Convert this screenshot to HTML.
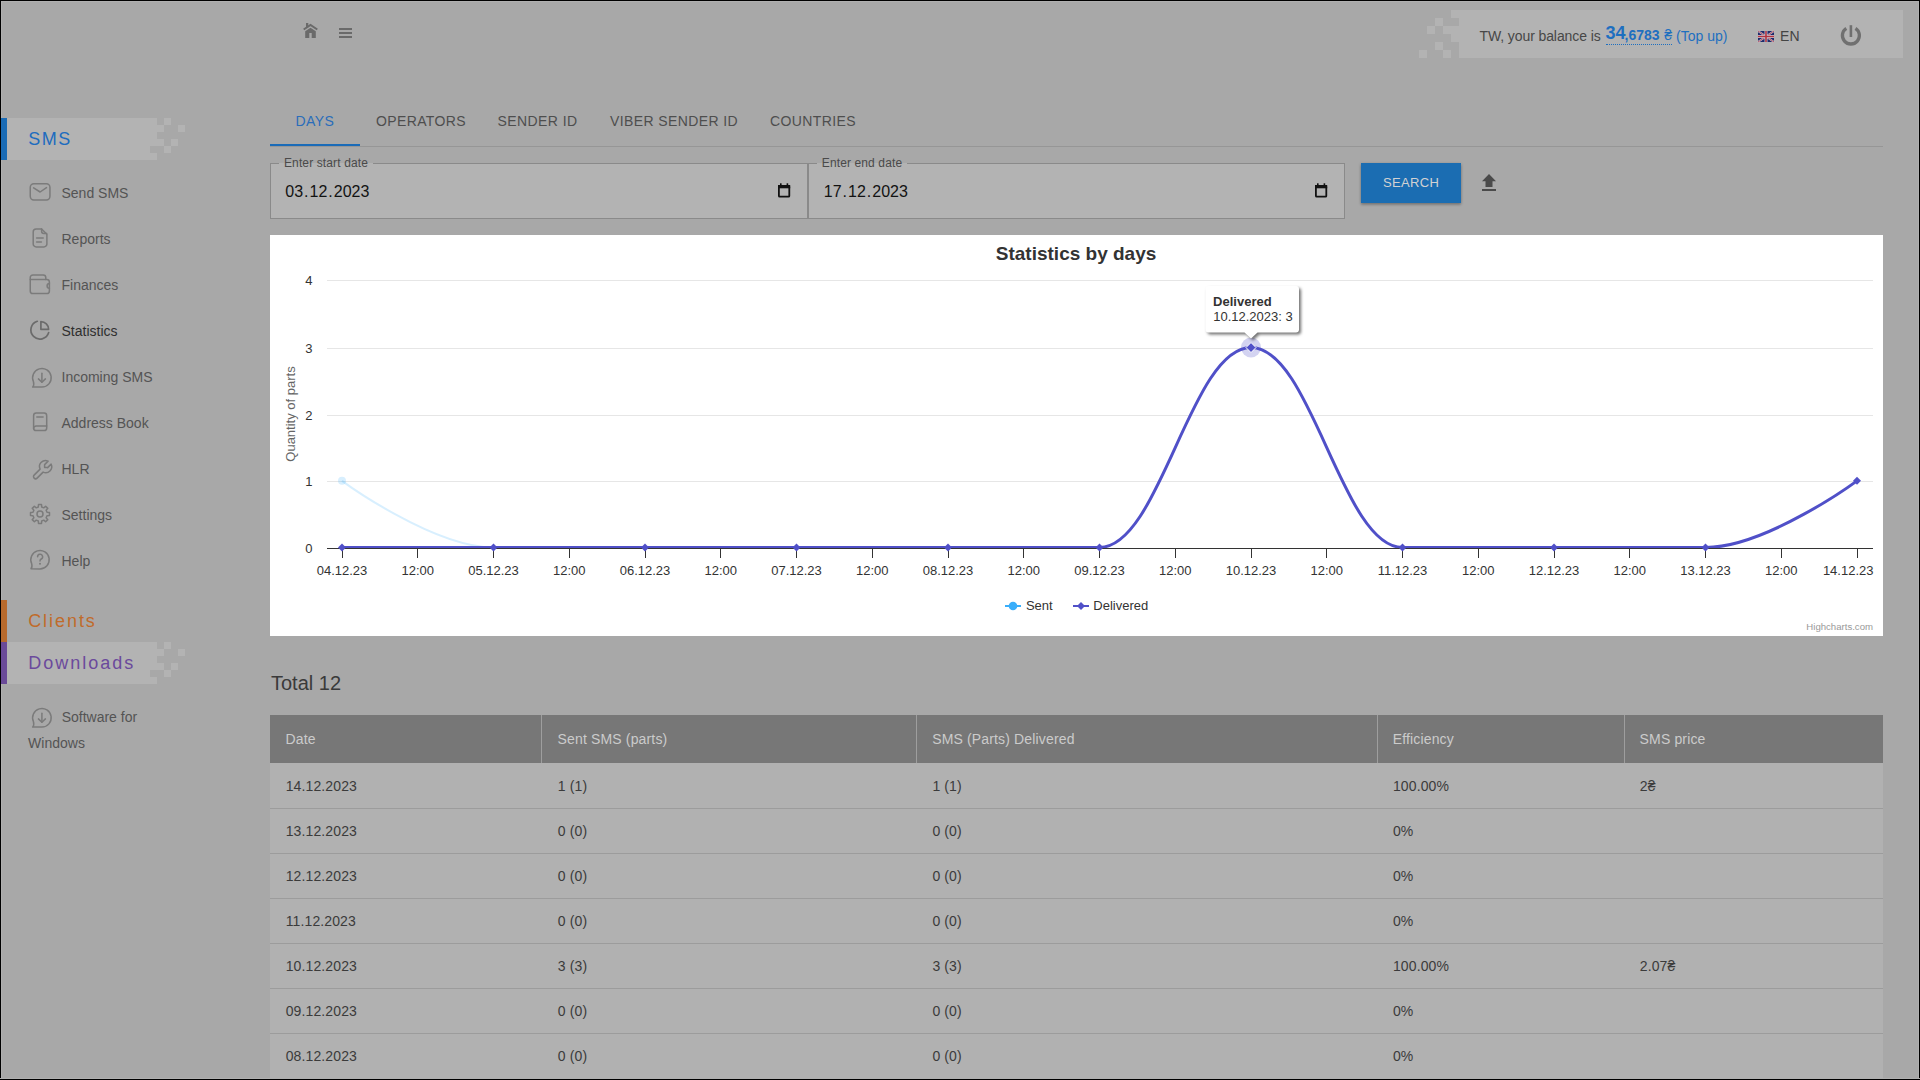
<!DOCTYPE html><html><head><meta charset="utf-8"><style>
html,body{margin:0;padding:0;}
body{width:1920px;height:1080px;overflow:hidden;position:relative;background:#a8a8a8;font-family:"Liberation Sans", sans-serif;}
.t{position:absolute;white-space:nowrap;}
.r{position:absolute;}
svg{position:absolute;overflow:visible;}
</style></head><body>
<div class="r" style="left:0px;top:0px;width:1920px;height:1px;background:#000;"></div>
<div class="r" style="left:0px;top:1079px;width:1920px;height:1px;background:#000;"></div>
<div class="r" style="left:0px;top:0px;width:1px;height:1080px;background:#000;"></div>
<div class="r" style="left:1919px;top:0px;width:1px;height:1080px;background:#000;"></div>
<div class="r" style="left:1px;top:1px;width:1918px;height:1px;background:#b0b0b0;"></div>
<div class="r" style="left:1px;top:1078px;width:1918px;height:1px;background:#b0b0b0;"></div>
<div class="r" style="left:1px;top:1px;width:1px;height:1078px;background:#b0b0b0;"></div>
<div class="r" style="left:1918px;top:1px;width:1px;height:1078px;background:#b0b0b0;"></div>
<div class="r" style="left:7px;top:118px;width:150px;height:42px;background:#b3b3b3;"></div>
<div class="r" style="left:164px;top:118px;width:7px;height:7px;background:#b3b3b3;"></div>
<div class="r" style="left:157px;top:125px;width:7px;height:7px;background:#b3b3b3;"></div>
<div class="r" style="left:178px;top:125px;width:7px;height:7px;background:#b3b3b3;"></div>
<div class="r" style="left:157px;top:139px;width:7px;height:7px;background:#b3b3b3;"></div>
<div class="r" style="left:171px;top:139px;width:7px;height:7px;background:#b3b3b3;"></div>
<div class="r" style="left:164px;top:146px;width:7px;height:7px;background:#b3b3b3;"></div>
<div class="r" style="left:150px;top:146px;width:7px;height:7px;background:#a8a8a8;"></div>
<div class="r" style="left:7px;top:642px;width:150px;height:42px;background:#b3b3b3;"></div>
<div class="r" style="left:164px;top:642px;width:7px;height:7px;background:#b3b3b3;"></div>
<div class="r" style="left:157px;top:649px;width:7px;height:7px;background:#b3b3b3;"></div>
<div class="r" style="left:178px;top:649px;width:7px;height:7px;background:#b3b3b3;"></div>
<div class="r" style="left:157px;top:663px;width:7px;height:7px;background:#b3b3b3;"></div>
<div class="r" style="left:171px;top:663px;width:7px;height:7px;background:#b3b3b3;"></div>
<div class="r" style="left:164px;top:670px;width:7px;height:7px;background:#b3b3b3;"></div>
<div class="r" style="left:150px;top:670px;width:7px;height:7px;background:#a8a8a8;"></div>
<div class="r" style="left:1px;top:118px;width:6px;height:42px;background:#1a6bb5;"></div>
<div class="r" style="left:1px;top:600px;width:6px;height:42px;background:#b86a2c;"></div>
<div class="r" style="left:1px;top:642px;width:6px;height:42px;background:#6a4a98;"></div>
<div class="r" style="left:1459px;top:10px;width:444px;height:48px;background:#b3b3b3;"></div>
<div class="r" style="left:1451px;top:10px;width:8px;height:8px;background:#b3b3b3;"></div>
<div class="r" style="left:1435px;top:18px;width:8px;height:8px;background:#b3b3b3;"></div>
<div class="r" style="left:1443px;top:26px;width:16px;height:8px;background:#b3b3b3;"></div>
<div class="r" style="left:1427px;top:26px;width:8px;height:8px;background:#b3b3b3;"></div>
<div class="r" style="left:1451px;top:34px;width:8px;height:8px;background:#b3b3b3;"></div>
<div class="r" style="left:1435px;top:42px;width:8px;height:8px;background:#b3b3b3;"></div>
<div class="r" style="left:1419px;top:50px;width:8px;height:8px;background:#b3b3b3;"></div>
<div class="r" style="left:1443px;top:50px;width:8px;height:8px;background:#b3b3b3;"></div>
<div class="t" style="left:28.15px;top:129.56px;font-size:18px;line-height:18px;color:#1d6cbf;letter-spacing:1.6px;">SMS</div>
<div class="t" style="left:28.15px;top:611.56px;font-size:18px;line-height:18px;color:#c06b2b;letter-spacing:1.95px;">Clients</div>
<div class="t" style="left:28.15px;top:653.51px;font-size:18px;line-height:18px;color:#6b4a9c;letter-spacing:2.0px;">Downloads</div>
<div class="t" style="left:61.5px;top:186.15px;font-size:14px;line-height:14px;color:#545454;">Send SMS</div>
<div class="t" style="left:61.5px;top:232.15px;font-size:14px;line-height:14px;color:#545454;">Reports</div>
<div class="t" style="left:61.5px;top:278.15px;font-size:14px;line-height:14px;color:#545454;">Finances</div>
<div class="t" style="left:61.5px;top:324.15px;font-size:14px;line-height:14px;color:#2f2f2f;">Statistics</div>
<div class="t" style="left:61.5px;top:370.15px;font-size:14px;line-height:14px;color:#545454;">Incoming SMS</div>
<div class="t" style="left:61.5px;top:416.15px;font-size:14px;line-height:14px;color:#545454;">Address Book</div>
<div class="t" style="left:61.5px;top:462.15px;font-size:14px;line-height:14px;color:#545454;">HLR</div>
<div class="t" style="left:61.5px;top:508.15px;font-size:14px;line-height:14px;color:#545454;">Settings</div>
<div class="t" style="left:61.5px;top:554.15px;font-size:14px;line-height:14px;color:#545454;">Help</div>
<div class="t" style="left:61.65px;top:709.95px;font-size:14px;line-height:14px;color:#545454;">Software for</div>
<div class="t" style="left:28.1px;top:735.85px;font-size:14px;line-height:14px;color:#545454;">Windows</div>
<svg width="1920" height="1080" style="left:0;top:0" viewBox="0 0 1920 1080">
<g fill="none" stroke="#7b7b7b" stroke-width="1.5" stroke-linecap="round" stroke-linejoin="round">
<rect x="30.25" y="183.85" width="19.7" height="16.1" rx="3.6"/>
<polyline points="33.6,187.8 40.1,192 46.5,187.6"/>
<path d="M 41.6 228.95 H 36.2 A 3 3 0 0 0 33.2 231.95 V 243.9 A 3 3 0 0 0 36.2 246.9 H 43.9 A 3 3 0 0 0 46.9 243.9 V 234.2 Z"/>
<path d="M 41.6 228.95 V 231.2 A 2.2 2.2 0 0 0 43.8 233.4 H 46.6"/>
<line x1="36.6" y1="238" x2="43.2" y2="238"/>
<line x1="36.6" y1="241.9" x2="41.4" y2="241.9"/>
<path d="M 30.25 279.4 V 290.9 A 2.6 2.6 0 0 0 32.85 293.5 H 46.8 A 2.6 2.6 0 0 0 49.4 290.9 V 282 A 2.6 2.6 0 0 0 46.8 279.4 Z"/>
<path d="M 30.25 279.4 V 277.6 A 2.6 2.6 0 0 1 32.85 275 H 43.2 A 2.6 2.6 0 0 1 45.8 277.6 V 279.4"/>
<path d="M 49.4 283.6 A 2.3 2.3 0 0 0 49.4 288.2"/>
<path d="M 32.70 387.10 L 41.90 387.10 A 9.3 9.3 0 1 0 33.47 381.73 Q 34.37 385.42 32.70 387.10 Z"/>
<line x1="41.9" y1="373.2" x2="41.9" y2="382.2"/>
<polyline points="38.4,378.9 41.9,382.3 45.4,378.9"/>
<rect x="33.6" y="413.1" width="13.1" height="17.5" rx="2.6"/>
<path d="M 33.6 428.6 A 2.6 2.6 0 0 1 36.2 426 H 46.7"/>
<line x1="36.8" y1="417" x2="43.1" y2="417"/>
<g transform="translate(30.6 457.6)"><path d="M17 10h-3v-3l3.5 -3.5a6 6 0 0 0 -8 8l-6 6a2 2 0 0 0 3 3l6 -6a6 6 0 0 0 8 -8l-3.5 3.5"/></g>
<path d="M 38.50 504.52 L 41.50 504.52 L 41.68 507.00 L 43.76 507.86 L 45.64 506.23 L 47.77 508.36 L 46.14 510.24 L 47.00 512.32 L 49.48 512.50 L 49.48 515.50 L 47.00 515.68 L 46.14 517.76 L 47.77 519.64 L 45.64 521.77 L 43.76 520.14 L 41.68 521.00 L 41.50 523.48 L 38.50 523.48 L 38.32 521.00 L 36.24 520.14 L 34.36 521.77 L 32.23 519.64 L 33.86 517.76 L 33.00 515.68 L 30.52 515.50 L 30.52 512.50 L 33.00 512.32 L 33.86 510.24 L 32.23 508.36 L 34.36 506.23 L 36.24 507.86 L 38.32 507.00 Z"/>
<circle cx="40" cy="514" r="3"/>
<path d="M 31.00 568.80 L 40.00 568.90 A 9.2 9.2 0 1 0 31.66 563.59 Q 32.56 567.19 31.00 568.80 Z"/>
<path d="M 37.6 556.8 A 2.5 2.5 0 1 1 41.3 559 C 40.4 559.5 40 560.1 40 560.9"/>
<path d="M 32.70 727.10 L 41.90 727.10 A 9.3 9.3 0 1 0 33.47 721.73 Q 34.37 725.42 32.70 727.10 Z"/>
<line x1="41.9" y1="713.2" x2="41.9" y2="722.2"/>
<polyline points="38.4,718.9 41.9,722.3 45.4,718.9"/>
</g>
<circle cx="40" cy="563.7" r="1" fill="#7b7b7b"/>
<g fill="none" stroke="#6b6b6b" stroke-width="1.7" stroke-linecap="round" stroke-linejoin="round">
<path d="M 37.3 321.3 A 9.1 9.1 0 1 0 48.7 332.6"/>
<path d="M 40.9 321.6 V 329.3 H 48.6 A 7.7 7.7 0 0 0 40.9 321.6 Z"/>
</g>
<g fill="#6a6a6a">
<polyline points="303.7,29.5 310.5,24.9 317.3,29.5" fill="none" stroke="#6a6a6a" stroke-width="2"/>
<rect x="306" y="23" width="2.3" height="4.2"/>
<path d="M 305.2 31.3 L 310.5 27.7 L 315.8 31.3 V 38 H 311.7 V 33 H 309.3 V 38 H 305.2 Z"/>
<rect x="339" y="28" width="13" height="2"/>
<rect x="339" y="32" width="13" height="2"/>
<rect x="339" y="36" width="13" height="2"/>
</g>
</svg>
<div class="t" style="left:1479.5px;top:28.85px;font-size:14px;line-height:14px;color:#474747;letter-spacing:-0.1px;">TW, your balance is</div>
<div class="t" style="left:1605.6000000000001px;top:24.46px;font-size:18px;line-height:18px;color:#1e6fc0;font-weight:700;">34</div>
<div class="t" style="left:1624.6px;top:27.95px;font-size:14px;line-height:14px;color:#1e6fc0;font-weight:700;">,6783</div>
<div class="t" style="left:1664.2px;top:27.95px;font-size:14px;line-height:14px;color:#1e6fc0;">&#8372;</div>
<div class="r" style="left:1606px;top:44px;width:66px;height:1px;background:transparent;border-top:1px dotted #1e6fc0;"></div>
<div class="t" style="left:1676.1000000000001px;top:28.85px;font-size:14px;line-height:14px;color:#1e6fc0;">(Top up)</div>
<svg width="16" height="11" style="left:1758px;top:31px" viewBox="0 0 60 40" preserveAspectRatio="none">
<rect width="60" height="40" fill="#1f2a6b"/>
<path d="M0,0 L60,40 M60,0 L0,40" stroke="#c9c9d6" stroke-width="7"/>
<path d="M0,0 L60,40 M60,0 L0,40" stroke="#b23a48" stroke-width="3"/>
<path d="M30,0 V40 M0,20 H60" stroke="#c9c9d6" stroke-width="11"/>
<path d="M30,0 V40 M0,20 H60" stroke="#b2333f" stroke-width="6"/>
</svg>
<div class="t" style="left:1780.1px;top:29.15px;font-size:14px;line-height:14px;color:#444444;">EN</div>
<svg width="30" height="30" style="left:1836px;top:20px" viewBox="1836 20 30 30">
<path d="M 1846.3 28.35 A 8.5 8.5 0 1 0 1855.5 28.35" fill="none" stroke="#707070" stroke-width="3.3" stroke-linecap="butt"/>
<rect x="1849.6" y="25.2" width="2.6" height="11.8" fill="#707070"/>
</svg>
<div class="t" style="left:295.45px;top:113.95px;font-size:14px;line-height:14px;color:#2a6dba;letter-spacing:0.4px;">DAYS</div>
<div class="t" style="left:375.9px;top:113.95px;font-size:14px;line-height:14px;color:#4e4e4e;letter-spacing:0.4px;">OPERATORS</div>
<div class="t" style="left:497.6px;top:113.95px;font-size:14px;line-height:14px;color:#4e4e4e;letter-spacing:0.4px;">SENDER ID</div>
<div class="t" style="left:609.9px;top:113.95px;font-size:14px;line-height:14px;color:#4e4e4e;letter-spacing:0.4px;">VIBER SENDER ID</div>
<div class="t" style="left:770.0px;top:113.95px;font-size:14px;line-height:14px;color:#4e4e4e;letter-spacing:0.4px;">COUNTRIES</div>
<div class="r" style="left:270px;top:146px;width:1613px;height:1px;background:#969696;"></div>
<div class="r" style="left:270px;top:144px;width:90px;height:2px;background:#1a6bb8;"></div>
<div class="r" style="left:270px;top:163px;width:538px;height:56px;background:#b3b3b3;box-sizing:border-box;border:1px solid #8a8a8a;"></div>
<div class="r" style="left:279px;top:162px;width:94px;height:2px;background:#b0b0b0;background:linear-gradient(#a8a8a8 0 1px,#b3b3b3 1px);"></div>
<div class="t" style="left:284.0px;top:156.74px;font-size:12px;line-height:12px;color:#4a4a4a;letter-spacing:0.12px;">Enter start date</div>
<div class="t" style="left:284.3px;top:183.56px;font-size:16px;line-height:16px;color:#121212;"><span style="padding:0 1px">03</span>.<span style="padding:0 1px">12</span>.<span style="padding:0 1px">2023</span></div>
<svg width="14" height="16" style="left:778px;top:182px" viewBox="0 0 14 16">
<rect x="0.9" y="3.9" width="10.4" height="10.8" fill="none" stroke="#111" stroke-width="1.8" rx="0.8"/>
<rect x="0" y="3" width="12.2" height="3.3" fill="#111"/>
<rect x="2" y="1.3" width="1.6" height="2.2" fill="#111"/>
<rect x="8.6" y="1.3" width="1.6" height="2.2" fill="#111"/>
</svg>
<div class="r" style="left:808px;top:163px;width:537px;height:56px;background:#b3b3b3;box-sizing:border-box;border:1px solid #8a8a8a;"></div>
<div class="r" style="left:817px;top:162px;width:90px;height:2px;background:#b0b0b0;background:linear-gradient(#a8a8a8 0 1px,#b3b3b3 1px);"></div>
<div class="t" style="left:821.8000000000001px;top:156.74px;font-size:12px;line-height:12px;color:#4a4a4a;letter-spacing:0.12px;">Enter end date</div>
<div class="t" style="left:822.8px;top:183.56px;font-size:16px;line-height:16px;color:#121212;"><span style="padding:0 1px">17</span>.<span style="padding:0 1px">12</span>.<span style="padding:0 1px">2023</span></div>
<svg width="14" height="16" style="left:1315px;top:182px" viewBox="0 0 14 16">
<rect x="0.9" y="3.9" width="10.4" height="10.8" fill="none" stroke="#111" stroke-width="1.8" rx="0.8"/>
<rect x="0" y="3" width="12.2" height="3.3" fill="#111"/>
<rect x="2" y="1.3" width="1.6" height="2.2" fill="#111"/>
<rect x="8.6" y="1.3" width="1.6" height="2.2" fill="#111"/>
</svg>
<div class="r" style="left:1361px;top:163px;width:100px;height:40px;background:#1b6db2;box-shadow:0 1px 3px rgba(0,0,0,0.25),0 2px 2px rgba(0,0,0,0.12);"></div>
<div class="t" style="left:1382.95px;top:175.90px;font-size:13px;line-height:13px;color:#d2d2d2;letter-spacing:0.37px;">SEARCH</div>
<svg width="16" height="20" style="left:1481px;top:172px" viewBox="1481 172 16 20">
<path d="M 1482 181.2 L 1489 174 L 1496 181.2 H 1492.5 V 187 H 1485.5 V 181.2 Z" fill="#4a4a4a"/>
<rect x="1482" y="189" width="14" height="2" fill="#4a4a4a"/>
</svg>
<div class="r" style="left:270px;top:235px;width:1613px;height:401px;background:#ffffff;"></div>
<svg width="1613" height="401" style="left:270px;top:235px" viewBox="270 235 1613 401">
<rect x="327" y="280" width="1546" height="1" fill="#e6e6e6"/>
<rect x="327" y="348" width="1546" height="1" fill="#e6e6e6"/>
<rect x="327" y="415" width="1546" height="1" fill="#e6e6e6"/>
<rect x="327" y="481" width="1546" height="1" fill="#e6e6e6"/>
<path d="M 342 480.85 C 342 480.85 432.9 547.5 493.5 547.5" fill="none" stroke="#3aaefa" stroke-opacity="0.2" stroke-width="2"/>
<circle cx="342" cy="480.85" r="4" fill="#3aaefa" fill-opacity="0.2"/>
<path d="M 342.00 547.50 C 342.00 547.50 432.90 547.50 493.50 547.50 C 554.10 547.50 584.40 547.50 645.00 547.50 C 705.60 547.50 735.90 547.50 796.50 547.50 C 857.10 547.50 887.40 547.50 948.00 547.50 C 1008.60 547.50 1038.90 547.50 1099.50 547.50 C 1160.10 547.50 1190.40 347.55 1251.00 347.55 C 1311.60 347.55 1341.90 547.50 1402.50 547.50 C 1463.10 547.50 1493.40 547.50 1554.00 547.50 C 1614.60 547.50 1644.90 547.50 1705.50 547.50 C 1766.10 547.50 1857.00 480.85 1857.00 480.85" fill="none" stroke="#5050c8" stroke-width="3" stroke-linejoin="round" stroke-linecap="round"/>
<rect x="327" y="548" width="1546" height="1" fill="#333333"/>
<rect x="342" y="549" width="1" height="9" fill="#333333"/>
<rect x="417" y="549" width="1" height="9" fill="#333333"/>
<rect x="493" y="549" width="1" height="9" fill="#333333"/>
<rect x="569" y="549" width="1" height="9" fill="#333333"/>
<rect x="645" y="549" width="1" height="9" fill="#333333"/>
<rect x="720" y="549" width="1" height="9" fill="#333333"/>
<rect x="796" y="549" width="1" height="9" fill="#333333"/>
<rect x="872" y="549" width="1" height="9" fill="#333333"/>
<rect x="948" y="549" width="1" height="9" fill="#333333"/>
<rect x="1023" y="549" width="1" height="9" fill="#333333"/>
<rect x="1099" y="549" width="1" height="9" fill="#333333"/>
<rect x="1175" y="549" width="1" height="9" fill="#333333"/>
<rect x="1251" y="549" width="1" height="9" fill="#333333"/>
<rect x="1326" y="549" width="1" height="9" fill="#333333"/>
<rect x="1402" y="549" width="1" height="9" fill="#333333"/>
<rect x="1478" y="549" width="1" height="9" fill="#333333"/>
<rect x="1554" y="549" width="1" height="9" fill="#333333"/>
<rect x="1629" y="549" width="1" height="9" fill="#333333"/>
<rect x="1705" y="549" width="1" height="9" fill="#333333"/>
<rect x="1781" y="549" width="1" height="9" fill="#333333"/>
<rect x="1857" y="549" width="1" height="9" fill="#333333"/>
<path d="M 342.0 543.5 L 346.0 547.5 L 342.0 551.5 L 338.0 547.5 Z" fill="#5050c8"/>
<path d="M 493.5 543.5 L 497.5 547.5 L 493.5 551.5 L 489.5 547.5 Z" fill="#5050c8"/>
<path d="M 645.0 543.5 L 649.0 547.5 L 645.0 551.5 L 641.0 547.5 Z" fill="#5050c8"/>
<path d="M 796.5 543.5 L 800.5 547.5 L 796.5 551.5 L 792.5 547.5 Z" fill="#5050c8"/>
<path d="M 948.0 543.5 L 952.0 547.5 L 948.0 551.5 L 944.0 547.5 Z" fill="#5050c8"/>
<path d="M 1099.5 543.5 L 1103.5 547.5 L 1099.5 551.5 L 1095.5 547.5 Z" fill="#5050c8"/>
<path d="M 1402.5 543.5 L 1406.5 547.5 L 1402.5 551.5 L 1398.5 547.5 Z" fill="#5050c8"/>
<path d="M 1554.0 543.5 L 1558.0 547.5 L 1554.0 551.5 L 1550.0 547.5 Z" fill="#5050c8"/>
<path d="M 1705.5 543.5 L 1709.5 547.5 L 1705.5 551.5 L 1701.5 547.5 Z" fill="#5050c8"/>
<path d="M 1857.0 476.85 L 1861.0 480.85 L 1857.0 484.85 L 1853.0 480.85 Z" fill="#5050c8"/>
<circle cx="1251" cy="347.55" r="10" fill="#5050c8" fill-opacity="0.25"/>
<path d="M 1251 342.55 L 1256 347.55 L 1251 352.55 L 1246 347.55 Z" fill="#5050c8" stroke="#fff" stroke-width="1"/>
<rect x="1005" y="605" width="16" height="2" fill="#3aaefa"/><circle cx="1013" cy="606" r="4.3" fill="#3aaefa"/>
<rect x="1073" y="605" width="16" height="2" fill="#5050c8"/><path d="M 1081 602 L 1085 606 L 1081 610 L 1077 606 Z" fill="#5050c8"/>
<filter id="tsh" x="-30%" y="-30%" width="160%" height="160%"><feGaussianBlur stdDeviation="1.6"/></filter>
<path d="M 1208.5 286 H 1296 A 3 3 0 0 1 1299 289 V 329.5 A 3 3 0 0 1 1296 332.5 H 1257.5 L 1251 338.5 L 1244.5 332.5 H 1208.5 A 3 3 0 0 1 1205.5 329.5 V 289 A 3 3 0 0 1 1208.5 286 Z" fill="#000" fill-opacity="0.55" transform="translate(2 2)" filter="url(#tsh)"/>
<path d="M 1208.5 286 H 1296 A 3 3 0 0 1 1299 289 V 329.5 A 3 3 0 0 1 1296 332.5 H 1257.5 L 1251 338.5 L 1244.5 332.5 H 1208.5 A 3 3 0 0 1 1205.5 329.5 V 289 A 3 3 0 0 1 1208.5 286 Z" fill="#ffffff"/>
</svg>
<div class="t" style="left:995.8000000000001px;top:243.62px;font-size:19px;line-height:19px;color:#333333;font-weight:700;">Statistics by days</div>
<div class="t" style="left:272.4px;width:40px;text-align:right;top:541.60px;font-size:13px;line-height:13px;color:#333333;">0</div>
<div class="t" style="left:272.4px;width:40px;text-align:right;top:474.60px;font-size:13px;line-height:13px;color:#333333;">1</div>
<div class="t" style="left:272.4px;width:40px;text-align:right;top:408.60px;font-size:13px;line-height:13px;color:#333333;">2</div>
<div class="t" style="left:272.4px;width:40px;text-align:right;top:341.60px;font-size:13px;line-height:13px;color:#333333;">3</div>
<div class="t" style="left:272.4px;width:40px;text-align:right;top:273.60px;font-size:13px;line-height:13px;color:#333333;">4</div>
<div class="t" style="left:292.0px;width:100px;text-align:center;top:563.90px;font-size:13px;line-height:13px;color:#333333;">04.12.23</div>
<div class="t" style="left:367.75px;width:100px;text-align:center;top:563.90px;font-size:13px;line-height:13px;color:#333333;">12:00</div>
<div class="t" style="left:443.5px;width:100px;text-align:center;top:563.90px;font-size:13px;line-height:13px;color:#333333;">05.12.23</div>
<div class="t" style="left:519.25px;width:100px;text-align:center;top:563.90px;font-size:13px;line-height:13px;color:#333333;">12:00</div>
<div class="t" style="left:595.0px;width:100px;text-align:center;top:563.90px;font-size:13px;line-height:13px;color:#333333;">06.12.23</div>
<div class="t" style="left:670.75px;width:100px;text-align:center;top:563.90px;font-size:13px;line-height:13px;color:#333333;">12:00</div>
<div class="t" style="left:746.5px;width:100px;text-align:center;top:563.90px;font-size:13px;line-height:13px;color:#333333;">07.12.23</div>
<div class="t" style="left:822.25px;width:100px;text-align:center;top:563.90px;font-size:13px;line-height:13px;color:#333333;">12:00</div>
<div class="t" style="left:898.0px;width:100px;text-align:center;top:563.90px;font-size:13px;line-height:13px;color:#333333;">08.12.23</div>
<div class="t" style="left:973.75px;width:100px;text-align:center;top:563.90px;font-size:13px;line-height:13px;color:#333333;">12:00</div>
<div class="t" style="left:1049.5px;width:100px;text-align:center;top:563.90px;font-size:13px;line-height:13px;color:#333333;">09.12.23</div>
<div class="t" style="left:1125.25px;width:100px;text-align:center;top:563.90px;font-size:13px;line-height:13px;color:#333333;">12:00</div>
<div class="t" style="left:1201.0px;width:100px;text-align:center;top:563.90px;font-size:13px;line-height:13px;color:#333333;">10.12.23</div>
<div class="t" style="left:1276.75px;width:100px;text-align:center;top:563.90px;font-size:13px;line-height:13px;color:#333333;">12:00</div>
<div class="t" style="left:1352.5px;width:100px;text-align:center;top:563.90px;font-size:13px;line-height:13px;color:#333333;">11.12.23</div>
<div class="t" style="left:1428.25px;width:100px;text-align:center;top:563.90px;font-size:13px;line-height:13px;color:#333333;">12:00</div>
<div class="t" style="left:1504.0px;width:100px;text-align:center;top:563.90px;font-size:13px;line-height:13px;color:#333333;">12.12.23</div>
<div class="t" style="left:1579.75px;width:100px;text-align:center;top:563.90px;font-size:13px;line-height:13px;color:#333333;">12:00</div>
<div class="t" style="left:1655.5px;width:100px;text-align:center;top:563.90px;font-size:13px;line-height:13px;color:#333333;">13.12.23</div>
<div class="t" style="left:1731.25px;width:100px;text-align:center;top:563.90px;font-size:13px;line-height:13px;color:#333333;">12:00</div>
<div class="t" style="left:1773.5px;width:100px;text-align:right;top:563.90px;font-size:13px;line-height:13px;color:#333333;">14.12.23</div>
<div class="t" style="left:231px;top:407.25px;width:120px;text-align:center;font-size:13px;line-height:14px;color:#666666;transform:rotate(-90deg);">Quantity of parts</div>
<div class="t" style="left:1025.8999999999999px;top:598.80px;font-size:13px;line-height:13px;color:#333333;">Sent</div>
<div class="t" style="left:1093.3000000000002px;top:598.80px;font-size:13px;line-height:13px;color:#333333;">Delivered</div>
<div class="t" style="left:1213.1000000000001px;top:294.60px;font-size:13px;line-height:13px;color:#333333;font-weight:700;">Delivered</div>
<div class="t" style="left:1213.2px;top:309.80px;font-size:13px;line-height:13px;color:#333333;">10.12.2023: 3</div>
<div class="t" style="left:1753px;width:120px;text-align:right;top:621.67px;font-size:9.6px;line-height:9.6px;color:#999999;">Highcharts.com</div>
<div class="t" style="left:271.0px;top:673.07px;font-size:20px;line-height:20px;color:#3a3a3a;">Total 12</div>
<div class="r" style="left:270px;top:715px;width:1613px;height:48px;background:#777777;"></div>
<div class="r" style="left:541px;top:715px;width:1px;height:48px;background:#9e9e9e;"></div>
<div class="r" style="left:916px;top:715px;width:1px;height:48px;background:#9e9e9e;"></div>
<div class="r" style="left:1377px;top:715px;width:1px;height:48px;background:#9e9e9e;"></div>
<div class="r" style="left:1624px;top:715px;width:1px;height:48px;background:#9e9e9e;"></div>
<div class="t" style="left:285.5px;top:732.15px;font-size:14px;line-height:14px;color:#cbcbcb;letter-spacing:0.15px;">Date</div>
<div class="t" style="left:557.6px;top:732.15px;font-size:14px;line-height:14px;color:#cbcbcb;letter-spacing:0.15px;">Sent SMS (parts)</div>
<div class="t" style="left:932.2px;top:732.15px;font-size:14px;line-height:14px;color:#cbcbcb;letter-spacing:0.15px;">SMS (Parts) Delivered</div>
<div class="t" style="left:1392.75px;top:732.15px;font-size:14px;line-height:14px;color:#cbcbcb;letter-spacing:0.15px;">Efficiency</div>
<div class="t" style="left:1639.6px;top:732.15px;font-size:14px;line-height:14px;color:#cbcbcb;letter-spacing:0.15px;">SMS price</div>
<div class="r" style="left:270px;top:763px;width:1613px;height:315px;background:#b1b1b1;"></div>
<div class="r" style="left:270px;top:808px;width:1613px;height:1px;background:#9c9c9c;"></div>
<div class="t" style="left:285.7px;top:779.25px;font-size:14px;line-height:14px;color:#3b3b3b;letter-spacing:0.12px;">14.12.2023</div>
<div class="t" style="left:557.8000000000001px;top:779.25px;font-size:14px;line-height:14px;color:#3b3b3b;letter-spacing:0.12px;">1 (1)</div>
<div class="t" style="left:932.4000000000001px;top:779.25px;font-size:14px;line-height:14px;color:#3b3b3b;letter-spacing:0.12px;">1 (1)</div>
<div class="t" style="left:1392.95px;top:779.25px;font-size:14px;line-height:14px;color:#3b3b3b;letter-spacing:0.12px;">100.00%</div>
<div class="t" style="left:1639.8px;top:779.25px;font-size:14px;line-height:14px;color:#3b3b3b;letter-spacing:0.12px;">2&#8372;</div>
<div class="r" style="left:270px;top:853px;width:1613px;height:1px;background:#9c9c9c;"></div>
<div class="t" style="left:285.7px;top:824.25px;font-size:14px;line-height:14px;color:#3b3b3b;letter-spacing:0.12px;">13.12.2023</div>
<div class="t" style="left:557.8000000000001px;top:824.25px;font-size:14px;line-height:14px;color:#3b3b3b;letter-spacing:0.12px;">0 (0)</div>
<div class="t" style="left:932.4000000000001px;top:824.25px;font-size:14px;line-height:14px;color:#3b3b3b;letter-spacing:0.12px;">0 (0)</div>
<div class="t" style="left:1392.95px;top:824.25px;font-size:14px;line-height:14px;color:#3b3b3b;letter-spacing:0.12px;">0%</div>
<div class="r" style="left:270px;top:898px;width:1613px;height:1px;background:#9c9c9c;"></div>
<div class="t" style="left:285.7px;top:869.25px;font-size:14px;line-height:14px;color:#3b3b3b;letter-spacing:0.12px;">12.12.2023</div>
<div class="t" style="left:557.8000000000001px;top:869.25px;font-size:14px;line-height:14px;color:#3b3b3b;letter-spacing:0.12px;">0 (0)</div>
<div class="t" style="left:932.4000000000001px;top:869.25px;font-size:14px;line-height:14px;color:#3b3b3b;letter-spacing:0.12px;">0 (0)</div>
<div class="t" style="left:1392.95px;top:869.25px;font-size:14px;line-height:14px;color:#3b3b3b;letter-spacing:0.12px;">0%</div>
<div class="r" style="left:270px;top:943px;width:1613px;height:1px;background:#9c9c9c;"></div>
<div class="t" style="left:285.7px;top:914.25px;font-size:14px;line-height:14px;color:#3b3b3b;letter-spacing:0.12px;">11.12.2023</div>
<div class="t" style="left:557.8000000000001px;top:914.25px;font-size:14px;line-height:14px;color:#3b3b3b;letter-spacing:0.12px;">0 (0)</div>
<div class="t" style="left:932.4000000000001px;top:914.25px;font-size:14px;line-height:14px;color:#3b3b3b;letter-spacing:0.12px;">0 (0)</div>
<div class="t" style="left:1392.95px;top:914.25px;font-size:14px;line-height:14px;color:#3b3b3b;letter-spacing:0.12px;">0%</div>
<div class="r" style="left:270px;top:988px;width:1613px;height:1px;background:#9c9c9c;"></div>
<div class="t" style="left:285.7px;top:959.25px;font-size:14px;line-height:14px;color:#3b3b3b;letter-spacing:0.12px;">10.12.2023</div>
<div class="t" style="left:557.8000000000001px;top:959.25px;font-size:14px;line-height:14px;color:#3b3b3b;letter-spacing:0.12px;">3 (3)</div>
<div class="t" style="left:932.4000000000001px;top:959.25px;font-size:14px;line-height:14px;color:#3b3b3b;letter-spacing:0.12px;">3 (3)</div>
<div class="t" style="left:1392.95px;top:959.25px;font-size:14px;line-height:14px;color:#3b3b3b;letter-spacing:0.12px;">100.00%</div>
<div class="t" style="left:1639.8px;top:959.25px;font-size:14px;line-height:14px;color:#3b3b3b;letter-spacing:0.12px;">2.07&#8372;</div>
<div class="r" style="left:270px;top:1033px;width:1613px;height:1px;background:#9c9c9c;"></div>
<div class="t" style="left:285.7px;top:1004.25px;font-size:14px;line-height:14px;color:#3b3b3b;letter-spacing:0.12px;">09.12.2023</div>
<div class="t" style="left:557.8000000000001px;top:1004.25px;font-size:14px;line-height:14px;color:#3b3b3b;letter-spacing:0.12px;">0 (0)</div>
<div class="t" style="left:932.4000000000001px;top:1004.25px;font-size:14px;line-height:14px;color:#3b3b3b;letter-spacing:0.12px;">0 (0)</div>
<div class="t" style="left:1392.95px;top:1004.25px;font-size:14px;line-height:14px;color:#3b3b3b;letter-spacing:0.12px;">0%</div>
<div class="r" style="left:270px;top:1078px;width:1613px;height:1px;background:#9c9c9c;"></div>
<div class="t" style="left:285.7px;top:1049.25px;font-size:14px;line-height:14px;color:#3b3b3b;letter-spacing:0.12px;">08.12.2023</div>
<div class="t" style="left:557.8000000000001px;top:1049.25px;font-size:14px;line-height:14px;color:#3b3b3b;letter-spacing:0.12px;">0 (0)</div>
<div class="t" style="left:932.4000000000001px;top:1049.25px;font-size:14px;line-height:14px;color:#3b3b3b;letter-spacing:0.12px;">0 (0)</div>
<div class="t" style="left:1392.95px;top:1049.25px;font-size:14px;line-height:14px;color:#3b3b3b;letter-spacing:0.12px;">0%</div>
<div class="r" style="left:0;top:1078px;width:1920px;height:1px;background:#b0b0b0"></div><div class="r" style="left:0;top:1079px;width:1920px;height:1px;background:#000"></div>
</body></html>
